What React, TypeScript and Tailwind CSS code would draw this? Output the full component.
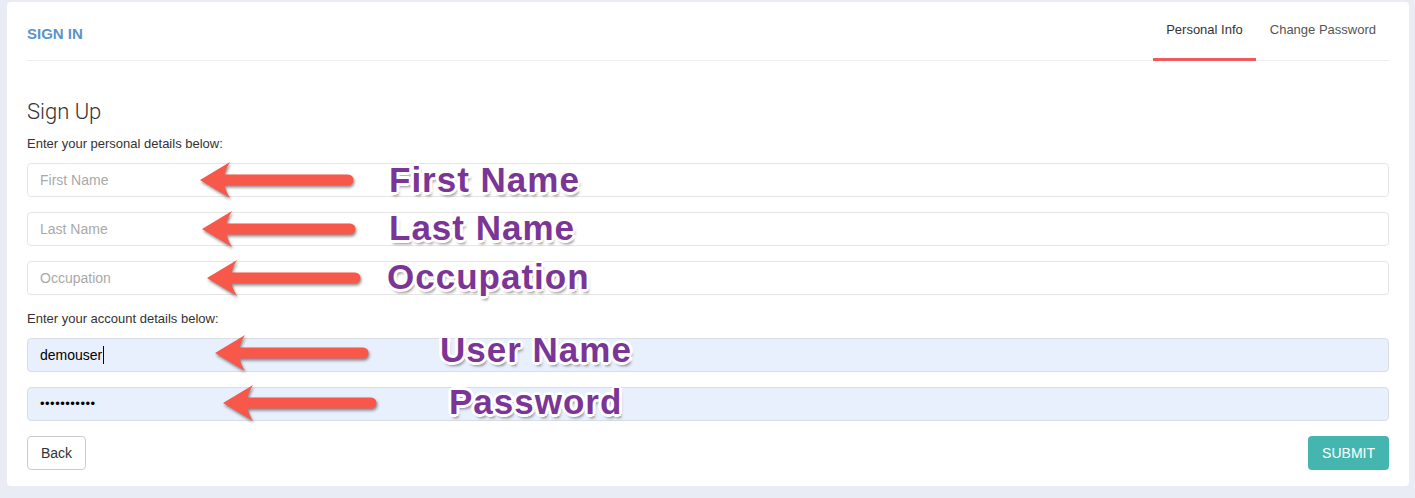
import React from 'react';

const notes = [
  { label: 'First Name', tipX: 200, y: 180, tail: 153, textX: 389, textY: 161 },
  { label: 'Last Name', tipX: 202, y: 229, tail: 153, textX: 389, textY: 209 },
  { label: 'Occupation', tipX: 207, y: 278, tail: 153, textX: 387, textY: 258 },
  { label: 'User Name', tipX: 215, y: 353, tail: 153, textX: 440, textY: 331 },
  { label: 'Password', tipX: 223, y: 403, tail: 153, textX: 449, textY: 383 },
];

function Arrow({ width }: { width: number }) {
  return (
    <svg width={width + 6} height={40} viewBox={`0 0 ${width + 6} 40`} className="[filter:drop-shadow(1px_2px_1.5px_rgba(0,0,0,0.45))]">
      <line x1={24} y1={19} x2={width - 4} y2={19} stroke="#f8584a" strokeWidth={11} strokeLinecap="round" />
      <path d="M1 19 L31 1 C27 7 25 13 25 19 C25 25 27 31 31 37 Z" fill="#f8584a" />
    </svg>
  );
}

export default function App() {
  return (
    <div className="min-h-[498px] bg-[#e9ecf4] pl-[7px] pr-[6px] pt-[2px] pb-[13px] font-['Liberation_Sans',Arial,sans-serif]">
      <div className="relative bg-white rounded-[4px] px-5 pb-4">
        {/* Header */}
        <div className="flex items-end justify-between border-b border-[#eeeeee] h-[59px]">
          <div className="self-center pt-[7px] text-[15px] font-bold text-[#5a94c8]">SIGN IN</div>
          <div className="flex items-end gap-[1px] text-[13px] text-[#333]">
            <div className="px-[13px] pb-[19px] border-b-[3px] border-[#f05a5e] -mb-[1px]">Personal Info</div>
            <div className="px-[13px] pb-[19px] text-[#555] border-b-[3px] border-transparent -mb-[1px]">Change Password</div>
          </div>
        </div>

        <h3 className="mt-[39px] font-['Roboto',sans-serif] text-[22px] font-light leading-[24px] text-[#333]">Sign Up</h3>
        <p className="mt-[12px] text-[13px] leading-[16px] text-[#333]">Enter your personal details below:</p>

        <div className="mt-[11px] flex flex-col gap-[15px]">
          <input className="h-[34px] w-full rounded-[4px] border border-[#e5e5e5] px-3 text-[14px] placeholder:text-[#a9a9a9] outline-none" placeholder="First Name" />
          <input className="h-[34px] w-full rounded-[4px] border border-[#e5e5e5] px-3 text-[14px] placeholder:text-[#a9a9a9] outline-none" placeholder="Last Name" />
          <input className="h-[34px] w-full rounded-[4px] border border-[#e5e5e5] px-3 text-[14px] placeholder:text-[#a9a9a9] outline-none" placeholder="Occupation" />
        </div>

        <p className="mt-[16px] text-[13px] leading-[16px] text-[#333]">Enter your account details below:</p>

        <div className="mt-[11px] flex flex-col gap-[15px]">
          <div className="flex h-[34px] w-full items-center rounded-[4px] border border-[#d9dde4] bg-[#e8f0fe] px-3 text-[14px] text-black">
            demouser<span className="ml-[1px] inline-block h-[18px] w-[1px] bg-black" />
          </div>
          <div className="flex h-[34px] w-full items-center rounded-[4px] border border-[#d9dde4] bg-[#e8f0fe] px-3 text-[13px] tracking-[0.5px] text-black">
            •••••••••••
          </div>
        </div>

        <div className="mt-[15px] flex items-center justify-between">
          <button className="h-[34px] rounded-[4px] border border-[#cccccc] bg-white px-[13px] text-[14px] text-[#333]">Back</button>
          <button className="h-[34px] rounded-[4px] bg-[#45b6af] px-[14px] text-[14px] text-white">SUBMIT</button>
        </div>

        {/* Annotations over the form */}
        {notes.map(n => (
          <React.Fragment key={n.label}>
            <div className="absolute" style={{ left: n.tipX - 7 - 1, top: n.y - 2 - 19 }}>
              <Arrow width={n.tail} />
            </div>
            <div
              className="absolute whitespace-nowrap text-[35px] font-bold leading-[38px] tracking-[1px] text-[#7b3596] [text-shadow:-3px_0_0_#fff,3px_0_0_#fff,0_-3px_0_#fff,0_3px_0_#fff,-2px_-2px_0_#fff,2px_-2px_0_#fff,-2px_2px_0_#fff,2px_2px_0_#fff,2px_4px_3px_rgba(0,0,0,0.45)]"
              style={{ left: n.textX - 7, top: n.textY - 2 }}
            >
              {n.label}
            </div>
          </React.Fragment>
        ))}
      </div>
    </div>
  );
}
